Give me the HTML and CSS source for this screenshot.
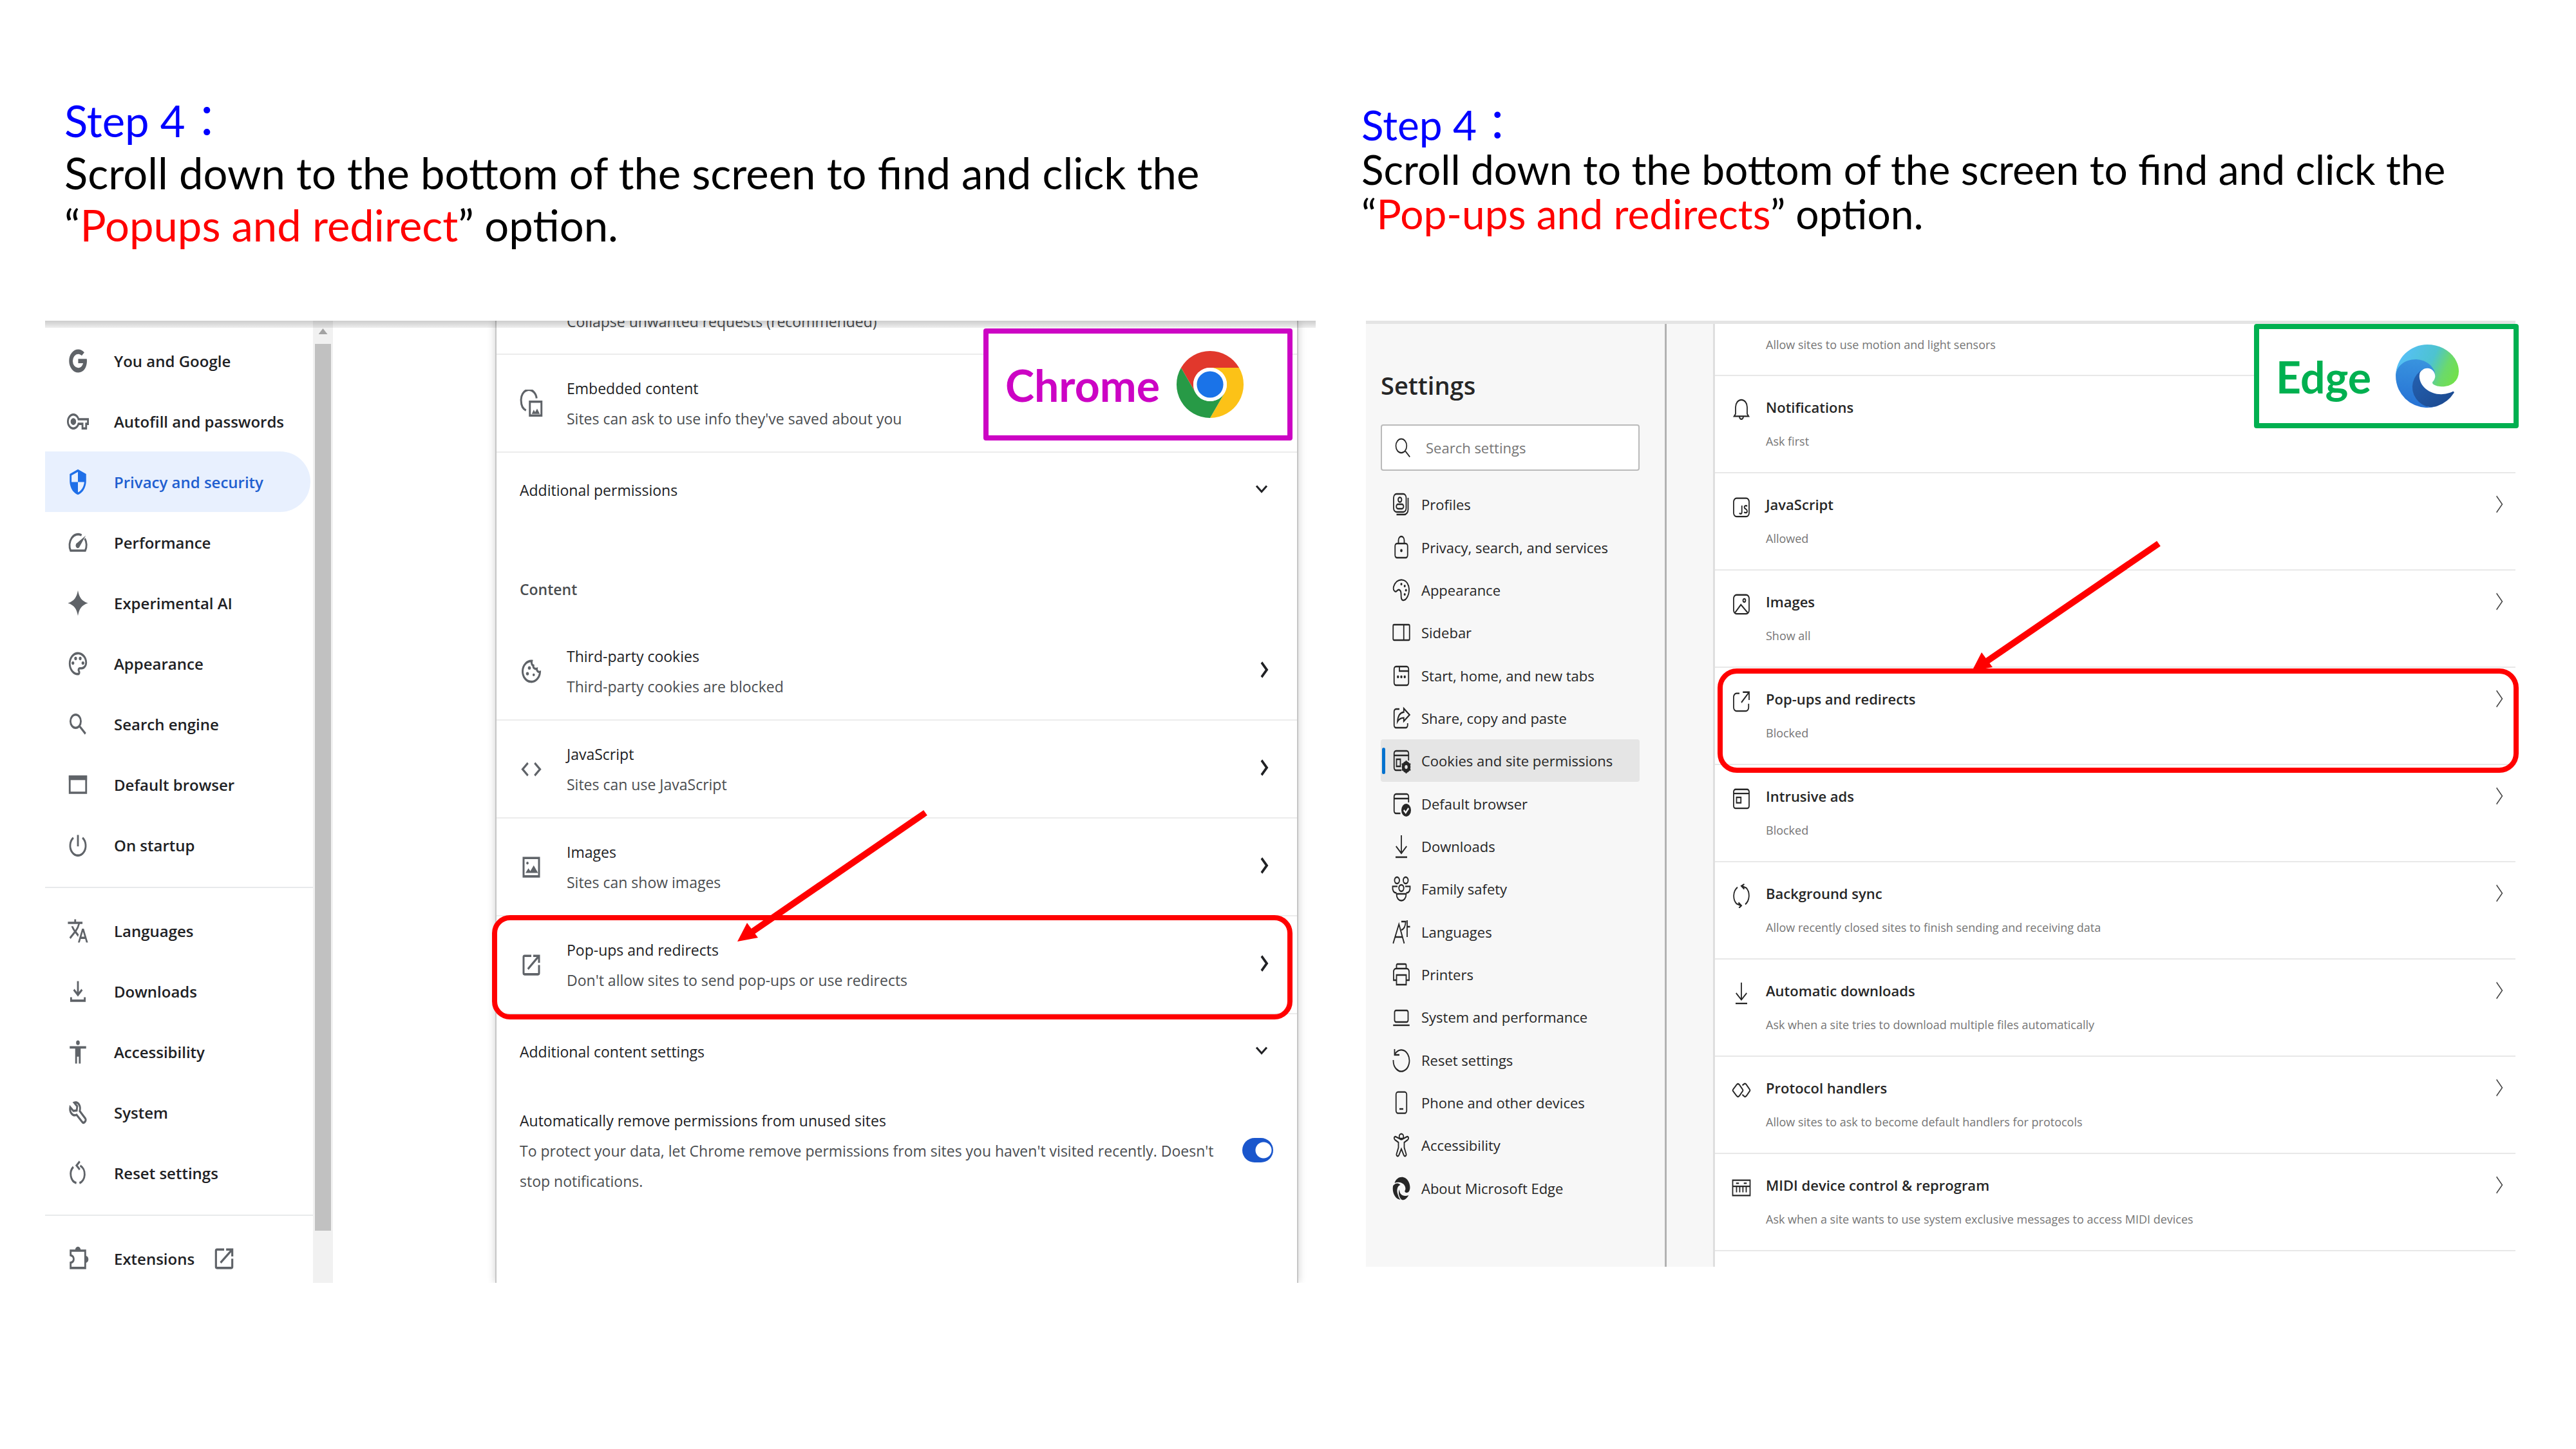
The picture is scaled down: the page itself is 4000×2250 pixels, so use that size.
FILE: index.html
```html
<!DOCTYPE html>
<html lang="en">
<head>
<meta charset="utf-8">
<title>Step 4: pop-ups and redirects</title>
<link rel="stylesheet" href="styles.css">
</head>
<body>
<svg class="sprite" aria-hidden="true">
  <defs>
    <linearGradient id="edge-dark" x1="0" y1="0" x2="1" y2="1"><stop offset="0" stop-color="#2563b4"/><stop offset="1" stop-color="#1b478c"/></linearGradient>
    <linearGradient id="edge-blue" x1="0.4" y1="0" x2="0.3" y2="1"><stop offset="0" stop-color="#3a95df"/><stop offset="1" stop-color="#2671d4"/></linearGradient>
    <linearGradient id="edge-green" x1="0" y1="0.3" x2="1" y2="0.6"><stop offset="0" stop-color="#57bffb"/><stop offset="0.55" stop-color="#4dc3d0"/><stop offset="0.8" stop-color="#6bd96c"/><stop offset="1" stop-color="#72e04c"/></linearGradient>
  </defs>
  <symbol id="g" viewBox="0 0 24 24" preserveAspectRatio="none"><path d="M12.3 10.2v3.8h5.4c-.7 2.3-2.6 4-5.4 4a6 6 0 1 1 0-12c1.500 0 2.900.5 3.900 1.400l2.800-2.800A10 10 0 0 0 12.300 2a10 10 0 1 0 0 20c8.400 0 10.200-7.900 9.400-11.800z"/></symbol>
  <symbol id="key" viewBox="0 0 24 24" preserveAspectRatio="none"><path d="M22 19h-6v-4h-2.700a7 7 0 1 1 0-6H24v6h-2zm-4-2h2v-4h2v-2H11.900a5 5 0 1 0 0 2H18zM7 15a3 3 0 1 1 0-6 3 3 0 0 1 0 6z"/></symbol>
  <symbol id="shield" viewBox="0 0 24 24" preserveAspectRatio="none"><path d="M12 1L3 5v6c0 5.550 3.840 10.740 9 12 5.160-1.260 9-6.450 9-12V5zm0 11h7c-.5 4.100-3.300 7.800-7 8.900V12H5V6.300l7-3.100z"/></symbol>
  <symbol id="speed" viewBox="0 0 24 24" preserveAspectRatio="none"><path class="s2" d="M16 5.600A9.500 9.500 0 0 0 4 19h16a9.500 9.500 0 0 0-.5-10.500"/><path d="M20.500 6l-6.500 9.300a2.300 2.300 0 1 1-2.800-3z"/></symbol>
  <symbol id="spark" viewBox="0 0 24 24" preserveAspectRatio="none"><path d="M12 1c1.400 6 4 9.200 11 11-7 1.800-9.600 5-11 11-1.400-6-4-9.200-11-11 7-1.800 9.600-5 11-11z"/></symbol>
  <symbol id="palette" viewBox="0 0 24 24" preserveAspectRatio="none"><path d="M12 22a10 10 0 1 1 0-20c5.500 0 10 4 10 9 0 3.300-2.700 6-6 6h-1.800c-.3 0-.5.2-.5.5 0 .7.800.9.800 2A2.500 2.500 0 0 1 12 22zm0-18a8 8 0 0 0 0 16c.5 0 .6-.5.400-.8-1.600-1.700-.400-4.200 1.800-4.200H16a4 4 0 0 0 4-4c0-3.900-3.600-7-8-7z"/><circle cx="6.500" cy="11.500" r="1.500"/><circle cx="9.500" cy="7.500" r="1.500"/><circle cx="14.500" cy="7.500" r="1.500"/><circle cx="17.500" cy="11.500" r="1.500"/></symbol>
  <symbol id="search" viewBox="0 0 24 24" preserveAspectRatio="none"><circle class="s2" cx="9.500" cy="9.500" r="5.700"/><path class="s2" d="M14 14l6.300 6.300"/></symbol>
  <symbol id="window" viewBox="0 0 24 24" preserveAspectRatio="none"><path class="s2" d="M3 5h18v14H3z"/><path d="M2 4h20v4H2z"/></symbol>
  <symbol id="power" viewBox="0 0 24 24" preserveAspectRatio="none"><path class="s2" d="M12 3v10M7 5.500a8.500 8.500 0 1 0 10 0"/></symbol>
  <symbol id="translate" viewBox="0 0 24 24" preserveAspectRatio="none"><path d="M12.900 15.100l-2.500-2.500a17 17 0 0 0 3.700-6.600H17V4h-7V2H8v2H1v2h11.200A16 16 0 0 1 9 11.300 16 16 0 0 1 6.700 8h-2c.7 1.600 1.700 3.200 3 4.600l-5.100 5L4 19l5-5 3.100 3.100zM18.500 10h-2L12 22h2l1.100-3h4.800l1.100 3h2zm-2.600 7l1.600-4.300 1.600 4.300z"/></symbol>
  <symbol id="download" viewBox="0 0 24 24" preserveAspectRatio="none"><path class="s2" d="M12 3v12M7.500 10.500L12 15l4.500-4.500M4.500 17v3h15v-3"/></symbol>
  <symbol id="person" viewBox="0 0 24 24" preserveAspectRatio="none"><path d="M12 2a2 2 0 1 1 0 4 2 2 0 0 1 0-4zm9 7h-6v13h-2v-6h-2v6H9V9H3V7h18z"/></symbol>
  <symbol id="wrench" viewBox="0 0 24 24" preserveAspectRatio="none"><path class="s2" d="M8 3.500l3.200 3.200-.5 3.500-3.700.4L3.500 7.300C2.500 11.500 6 15.500 10.500 14l6.500 6.500c1.600 1.300 4.500-1.500 3.200-3.200L14 10.700C15.500 6 12 2.300 8 3.500z"/></symbol>
  <symbol id="reset" viewBox="0 0 24 24" preserveAspectRatio="none"><path class="s2" d="M14.500 5.700a8 8 0 0 1-.8 15M10.300 20.700A8 8 0 0 1 7 6.700M14 2l-3.500 3.400L14 9"/></symbol>
  <symbol id="puzzle" viewBox="0 0 24 24" preserveAspectRatio="none"><path class="s2" d="M4 5h16v15H4v-4.500c4.500-1 4.500-5.500 0-6.500z"/><path d="M9 4.500a3 3 0 0 1 6 0zM20.500 9.500a3 3 0 0 1 0 6z"/></symbol>
  <symbol id="open" viewBox="0 0 24 24" preserveAspectRatio="none"><path d="M19 19H5V5h7V3H5a2 2 0 0 0-2 2v14a2 2 0 0 0 2 2h14a2 2 0 0 0 2-2v-7h-2zM14 3v2h3.600l-9.800 9.800 1.400 1.400L19 6.400V10h2V3z"/></symbol>
  <symbol id="embed" viewBox="0 0 24 24" preserveAspectRatio="none"><path class="s2" d="M17.500 7.500A8 8.500 0 0 0 1.500 10c0 3.500 1.800 6.500 5 8M10.500 10.500h12v12h-12z"/><path d="M12.500 21l2-3.500 1.500 2 2-3 2.800 4.500z"/></symbol>
  <symbol id="cookie" viewBox="0 0 24 24" preserveAspectRatio="none"><path class="s2" d="M12.500 3A9 9 0 1 0 21 12.500c-2 .3-3.500-.8-3.300-2.800-2 .5-4-.7-3.600-2.700C12.500 6.500 12 4.800 12.500 3z"/><circle cx="10" cy="9" r="1.500"/><circle cx="8" cy="14" r="1.500"/><circle cx="14.500" cy="15" r="1.200"/></symbol>
  <symbol id="code" viewBox="0 0 24 24" preserveAspectRatio="none"><path class="s2" d="M8.500 6.500L3 12l5.500 5.500M15.500 6.500L21 12l-5.500 5.500"/></symbol>
  <symbol id="image" viewBox="0 0 24 24" preserveAspectRatio="none"><path class="s2" d="M4 4h16v16H4z"/><path d="M6 17l3-4 2 2.500 3.500-5L19 17z"/><circle cx="8" cy="8.500" r="1.200"/></symbol>
  <symbol id="right" viewBox="0 0 24 24" preserveAspectRatio="none"><path class="s3" d="M8.500 4l7 8-7 8"/></symbol>
  <symbol id="down" viewBox="0 0 24 24" preserveAspectRatio="none"><path class="s3" d="M4 7.500l8 9 8-9"/></symbol>

  <symbol id="e-search" viewBox="0 0 20 20" preserveAspectRatio="none"><circle class="s1" cx="8.500" cy="8.500" r="6"/><path class="s1" d="M13 13l5 5"/></symbol>
  <symbol id="e-profile" viewBox="0 0 20 20" preserveAspectRatio="none"><rect class="s1" x="2" y="2" width="13" height="14" rx="3"/><path class="s1" d="M17 5v9a4 4 0 0 1-4 4H5"/><circle class="s1" cx="8.500" cy="6.500" r="1.800"/><rect class="s1" x="4.800" y="10" width="7.500" height="3.500" rx="1.700"/></symbol>
  <symbol id="e-lock" viewBox="0 0 20 20" preserveAspectRatio="none"><rect class="s1" x="3.500" y="7" width="13" height="11" rx="2"/><path class="s1" d="M7 7V4.500a3 3 0 0 1 6 0V7"/><circle cx="10" cy="12.500" r="1.200"/></symbol>
  <symbol id="e-palette" viewBox="0 0 20 20" preserveAspectRatio="none"><path class="s1" d="M2 7.500C5 .5 15 .5 17.500 7c2 6-2.500 11.500-6 11-3.500-.8 0-7-3.500-8-2.500-.8-2.500 2-4.500 1.200C2 10.500 1.500 9 2 7.500z"/><circle cx="10" cy="5.500" r="1"/><circle cx="13.500" cy="7" r="1"/><circle cx="14.800" cy="10.300" r="1"/><circle cx="13.500" cy="13.500" r="1"/></symbol>
  <symbol id="e-sidebar" viewBox="0 0 20 20" preserveAspectRatio="none"><rect class="s1" x="1.500" y="4" width="17" height="12" rx="1"/><path class="s1" d="M12.500 4v12"/></symbol>
  <symbol id="e-start" viewBox="0 0 20 20" preserveAspectRatio="none"><rect class="s1" x="2.500" y="3" width="15" height="14.500" rx="2"/><path class="s1" d="M8 3.500v3h9.500"/><circle cx="6.500" cy="11" r="1.100"/><circle cx="10" cy="11" r="1.100"/><circle cx="13.500" cy="11" r="1.100"/></symbol>
  <symbol id="e-share" viewBox="0 0 20 20" preserveAspectRatio="none"><path class="s1" d="M8 3H4.500a2 2 0 0 0-2 2v10.500a2 2 0 0 0 2 2h10a2 2 0 0 0 2-2V14M12.500 2.500l6 5-6 5V9.800c-3 0-5 1-6.500 3 .4-4 2.500-7 6.500-7.400z"/></symbol>
  <symbol id="e-cookies" viewBox="0 0 20 20" preserveAspectRatio="none"><path class="s1" d="M10 17.500H4.500a2 2 0 0 1-2-2v-11a2 2 0 0 1 2-2h11a2 2 0 0 1 2 2V10M2.500 6h15M5 9h4v5.500H5z"/><circle class="s3" cx="15" cy="15" r="3"/><path class="s1" d="M15 10v2M15 18v2M10.500 12.500l2 1M17.500 16.500l2 1M10.500 17.500l2-1M17.500 13.500l2-1"/></symbol>
  <symbol id="e-default" viewBox="0 0 20 20" preserveAspectRatio="none"><path class="s1" d="M9 17.500H4.500a2 2 0 0 1-2-2v-11a2 2 0 0 1 2-2h11a2 2 0 0 1 2 2V9M2.500 6h15"/><circle cx="15" cy="15" r="5"/><path class="cut" d="M12.500 15l2 2 3-3.500"/></symbol>
  <symbol id="e-download" viewBox="0 0 20 20" preserveAspectRatio="none"><path class="s1" d="M10 1.500v13.500M4.500 10l5.500 5.500 5.500-5.500M4 18.500h12"/></symbol>
  <symbol id="e-family" viewBox="0 0 20 20" preserveAspectRatio="none"><circle class="s1" cx="5.500" cy="3.500" r="2.500"/><circle class="s1" cx="14.500" cy="3.500" r="2.500"/><circle class="s1" cx="10" cy="9.500" r="2.500"/><path class="s1" d="M6 8.200H1c-.4 3 1 5 4 5M14 8.200h5c.4 3-1 5-4 5M5 14h10c0 7-10 7-10 0z"/></symbol>
  <symbol id="e-language" viewBox="0 0 20 20" preserveAspectRatio="none"><path class="s1" d="M1.500 19L7.500 4l5.500 15M3.500 14h8M10 2h4.500c-.3 4-2 6-4.500 6.500M16 1v13M16 6h3"/></symbol>
  <symbol id="e-printer" viewBox="0 0 20 20" preserveAspectRatio="none"><path class="s1" d="M5 5.500V3a1 1 0 0 1 1-1h8a1 1 0 0 1 1 1v2.500M5 14.500H2V8a2.500 2.500 0 0 1 2.500-2.500h11A2.500 2.500 0 0 1 18 8v6.500h-3M5 10.500h10V18H5z"/></symbol>
  <symbol id="e-laptop" viewBox="0 0 20 20" preserveAspectRatio="none"><rect class="s1" x="3" y="5" width="14" height="9" rx="1.500"/><path class="s1" d="M1.500 16.500h17"/></symbol>
  <symbol id="e-reset" viewBox="0 0 20 20" preserveAspectRatio="none"><path class="s1" d="M3 1.500V6h5M3 6A8.300 8.300 0 1 1 1.700 10"/></symbol>
  <symbol id="e-phone" viewBox="0 0 20 20" preserveAspectRatio="none"><rect class="s1" x="4.500" y="1.800" width="11" height="16.500" rx="2"/><path class="s1" d="M8 15h4"/></symbol>
  <symbol id="e-access" viewBox="0 0 20 20" preserveAspectRatio="none"><circle class="s1" cx="10" cy="3.500" r="2.200"/><path class="s1" d="M8 5L4 3.500C2.500 3.200 2 5 3.500 6L7 8v4l-2 5c-.4 1.700 1.800 2.300 2.500.8L10 13l2.500 4.800c.7 1.500 2.900.9 2.500-.8l-2-5V8l3.500-2C18 5 17.500 3.200 16 3.500L12 5z"/></symbol>
  <symbol id="e-edge" viewBox="0 0 20 20" preserveAspectRatio="none"><path d="M3 6C5 .5 14-.5 17.500 5c3 4.500 1 9-2.500 8.500-2-.3-1.500-1.500-.8-2.500C15 7 9 4 3 6zM1.500 8c3-2.500 6-2 7.500-.5-3 .5-4 4-3 6.500.7 2 1.500 3.500 3 5C3.500 18.500 0 13 1.500 8zM8 11c0 4 4 6 9.500 4.500C15 19 12 19.500 10.500 19 7.500 17.500 6.500 13 8 11z"/></symbol>
  <symbol id="e-bell" viewBox="0 0 20 20" preserveAspectRatio="none"><path class="s1" d="M4 13.500V8a6 6 0 0 1 12 0v5.500l1.500 2H2.500zM8 16c.5 2.500 3.500 2.500 4 0"/></symbol>
  <symbol id="e-js" viewBox="0 0 20 20" preserveAspectRatio="none"><rect class="s1" x="2" y="3" width="16" height="15" rx="3"/><path class="s1" d="M10.500 9v5.500c0 1.500-2 1.500-2.500.5M16 9.500c-1-.8-3-.5-3 .8 0 1.700 3 1.200 3 3.200 0 1.500-2.200 1.700-3.200.8"/></symbol>
  <symbol id="e-image" viewBox="0 0 20 20" preserveAspectRatio="none"><rect class="s1" x="2" y="2.500" width="16" height="15.500" rx="3"/><circle class="s1" cx="13" cy="7" r="1.300"/><path class="s1" d="M3.500 17l6-6.500 7 6.500"/></symbol>
  <symbol id="e-open" viewBox="0 0 20 20" preserveAspectRatio="none"><path class="s1" d="M8 3.500H5a3 3 0 0 0-3 3V15a3 3 0 0 0 3 3h9.500a3 3 0 0 0 3-3v-3M11.500 2.500H18V9M18 2.500L10 11"/></symbol>
  <symbol id="e-ads" viewBox="0 0 20 20" preserveAspectRatio="none"><rect class="s1" x="2" y="2.500" width="16" height="15.500" rx="2"/><path class="s1" d="M2 5.800h16M5 9h4.500v4.500H5z"/></symbol>
  <symbol id="e-sync" viewBox="0 0 20 20" preserveAspectRatio="none"><path class="s1" d="M6 3a8.500 8.500 0 0 0-1 13.500L9.500 18M7 15.500L10 18l-2.500 2M14 17a8.500 8.500 0 0 0 1-13.500L10.500 2M13 .5L10 2l3 2.500"/></symbol>
  <symbol id="e-protocol" viewBox="0 0 20 20" preserveAspectRatio="none"><path class="s1" d="M1.500 9.200L5 5.500c1-1 2-1 3 0l3.200 3.700c.6.6.6 1 0 1.600L8 14.500c-1 1-2 1-3 0l-3.500-3.700c-.6-.6-.6-1 0-1.600zM11 6l1.500-1c1-.7 2-.5 2.800.5l3.200 3.700c.6.6.6 1 0 1.600l-3.200 3.700c-1 1-2 1-3 0L11 13.500"/></symbol>
  <symbol id="e-midi" viewBox="0 0 20 20" preserveAspectRatio="none"><path class="s1" d="M1 4h18v12.500H1zM1 9h18M5 9v5M8.300 9v5M11.600 9v5M15 9v5M4.500 6.500h3M12.500 6.500h3"/></symbol>
  <symbol id="e-right" viewBox="0 0 20 20" preserveAspectRatio="none"><path class="s1" d="M6 2.500l8 7.500-8 7.500"/></symbol>
</svg>

<main class="slide">
  <section class="guide guide-chrome">
    <header class="instruction">
      <h2 class="step">Step 4<span lang="zh-Hant">：</span></h2>
      <p>Scroll down to the bottom of the screen to find and click the “<em>Popups and redirect</em>” option.</p>
    </header>
    <div class="chrome">
      <nav class="c-nav" aria-label="Chrome settings">
        <a href="#"><svg><use href="#g"/></svg>You and Google</a>
        <a href="#"><svg><use href="#key"/></svg>Autofill and passwords</a>
        <a href="#" class="current"><svg><use href="#shield"/></svg>Privacy and security</a>
        <a href="#"><svg><use href="#speed"/></svg>Performance</a>
        <a href="#"><svg><use href="#spark"/></svg>Experimental AI</a>
        <a href="#"><svg><use href="#palette"/></svg>Appearance</a>
        <a href="#"><svg><use href="#search"/></svg>Search engine</a>
        <a href="#"><svg><use href="#window"/></svg>Default browser</a>
        <a href="#"><svg><use href="#power"/></svg>On startup</a>
        <hr>
        <a href="#"><svg><use href="#translate"/></svg>Languages</a>
        <a href="#"><svg><use href="#download"/></svg>Downloads</a>
        <a href="#"><svg><use href="#person"/></svg>Accessibility</a>
        <a href="#"><svg><use href="#wrench"/></svg>System</a>
        <a href="#"><svg><use href="#reset"/></svg>Reset settings</a>
        <hr>
        <a href="#"><svg><use href="#puzzle"/></svg>Extensions<svg class="external"><use href="#open"/></svg></a>
      </nav>
      <div class="scrollbar"><span class="up"></span><span class="thumb"></span></div>
      <div class="c-card">
        <div class="c-cut"><span>Collapse unwanted requests (recommended)</span></div>
        <a href="#" class="c-row"><svg><use href="#embed"/></svg><span><b>Embedded content</b><small>Sites can ask to use info they've saved about you</small></span></a>
        <button type="button" class="c-expand">Additional permissions<svg><use href="#down"/></svg></button>
        <h3 class="c-title">Content</h3>
        <a href="#" class="c-row"><svg><use href="#cookie"/></svg><span><b>Third-party cookies</b><small>Third-party cookies are blocked</small></span><svg class="go"><use href="#right"/></svg></a>
        <a href="#" class="c-row"><svg><use href="#code"/></svg><span><b>JavaScript</b><small>Sites can use JavaScript</small></span><svg class="go"><use href="#right"/></svg></a>
        <a href="#" class="c-row"><svg><use href="#image"/></svg><span><b>Images</b><small>Sites can show images</small></span><svg class="go"><use href="#right"/></svg></a>
        <a href="#" class="c-row marked"><svg><use href="#open"/></svg><span><b>Pop-ups and redirects</b><small>Don't allow sites to send pop-ups or use redirects</small></span><svg class="go"><use href="#right"/></svg>
          <svg class="arrow" viewBox="0 0 296 208"><path d="M292 5L20 192" stroke="#f00" stroke-width="10"/><path d="M0 205l15-29 17 23z" fill="#f00"/></svg></a>
        <button type="button" class="c-expand">Additional content settings<svg><use href="#down"/></svg></button>
        <label class="c-toggle"><span><b>Automatically remove permissions from unused sites</b><small>To protect your data, let Chrome remove permissions from sites you haven't visited recently. Doesn't stop notifications.</small></span><input type="checkbox" checked></label>
      </div>
      <div class="badge badge-chrome">Chrome<svg viewBox="0 0 48 48"><path fill="#e1382c" d="M24 12h20.800A24 24 0 0 0 3.200 12l10.400 18A12 12 0 0 1 24 12z"/><path fill="#fcc217" d="M44.800 12H24a12 12 0 0 1 10.400 18L24 48a24 24 0 0 0 20.800-36z"/><path fill="#279a46" d="M3.200 12A24 24 0 0 0 24 48l10.400-18a12 12 0 0 1-20.800 0z"/><circle cx="24" cy="24" r="12" fill="#fff"/><circle cx="24" cy="24" r="9.500" fill="#1a73e8"/></svg></div>
    </div>
  </section>

  <section class="guide guide-edge">
    <header class="instruction">
      <h2 class="step">Step 4<span lang="zh-Hant">：</span></h2>
      <p>Scroll down to the bottom of the screen to find and click the “<em>Pop-ups and redirects</em>” option.</p>
    </header>
    <div class="edge">
      <div class="e-side">
        <h3 class="e-title">Settings</h3>
        <label class="e-search"><svg><use href="#e-search"/></svg><input type="search" placeholder="Search settings" aria-label="Search settings"></label>
        <nav class="e-nav" aria-label="Edge settings">
          <a href="#"><svg><use href="#e-profile"/></svg>Profiles</a>
          <a href="#"><svg><use href="#e-lock"/></svg>Privacy, search, and services</a>
          <a href="#"><svg><use href="#e-palette"/></svg>Appearance</a>
          <a href="#"><svg><use href="#e-sidebar"/></svg>Sidebar</a>
          <a href="#"><svg><use href="#e-start"/></svg>Start, home, and new tabs</a>
          <a href="#"><svg><use href="#e-share"/></svg>Share, copy and paste</a>
          <a href="#" class="current"><svg><use href="#e-cookies"/></svg>Cookies and site permissions</a>
          <a href="#"><svg><use href="#e-default"/></svg>Default browser</a>
          <a href="#"><svg><use href="#e-download"/></svg>Downloads</a>
          <a href="#"><svg><use href="#e-family"/></svg>Family safety</a>
          <a href="#"><svg><use href="#e-language"/></svg>Languages</a>
          <a href="#"><svg><use href="#e-printer"/></svg>Printers</a>
          <a href="#"><svg><use href="#e-laptop"/></svg>System and performance</a>
          <a href="#"><svg><use href="#e-reset"/></svg>Reset settings</a>
          <a href="#"><svg><use href="#e-phone"/></svg>Phone and other devices</a>
          <a href="#"><svg><use href="#e-access"/></svg>Accessibility</a>
          <a href="#"><svg><use href="#e-edge"/></svg>About Microsoft Edge</a>
        </nav>
      </div>
      <div class="e-card">
        <div class="e-cut"><small>Allow sites to use motion and light sensors</small></div>
        <a href="#" class="e-row"><svg><use href="#e-bell"/></svg><span><b>Notifications</b><small>Ask first</small></span></a>
        <a href="#" class="e-row"><svg><use href="#e-js"/></svg><span><b>JavaScript</b><small>Allowed</small></span><svg class="go"><use href="#e-right"/></svg></a>
        <a href="#" class="e-row"><svg><use href="#e-image"/></svg><span><b>Images</b><small>Show all</small></span><svg class="go"><use href="#e-right"/></svg></a>
        <a href="#" class="e-row marked"><svg><use href="#e-open"/></svg><span><b>Pop-ups and redirects</b><small>Blocked</small></span><svg class="go"><use href="#e-right"/></svg>
          <svg class="arrow" viewBox="0 0 294 208"><path d="M290 5L20 190" stroke="#f00" stroke-width="10"/><path d="M0 203l15-29 17 23z" fill="#f00"/></svg></a>
        <a href="#" class="e-row"><svg><use href="#e-ads"/></svg><span><b>Intrusive ads</b><small>Blocked</small></span><svg class="go"><use href="#e-right"/></svg></a>
        <a href="#" class="e-row"><svg><use href="#e-sync"/></svg><span><b>Background sync</b><small>Allow recently closed sites to finish sending and receiving data</small></span><svg class="go"><use href="#e-right"/></svg></a>
        <a href="#" class="e-row"><svg><use href="#e-download"/></svg><span><b>Automatic downloads</b><small>Ask when a site tries to download multiple files automatically</small></span><svg class="go"><use href="#e-right"/></svg></a>
        <a href="#" class="e-row"><svg><use href="#e-protocol"/></svg><span><b>Protocol handlers</b><small>Allow sites to ask to become default handlers for protocols</small></span><svg class="go"><use href="#e-right"/></svg></a>
        <a href="#" class="e-row"><svg><use href="#e-midi"/></svg><span><b>MIDI device control &amp; reprogram</b><small>Ask when a site wants to use system exclusive messages to access MIDI devices</small></span><svg class="go"><use href="#e-right"/></svg></a>
      </div>
      <div class="badge badge-edge">Edge<svg viewBox="0 0 256 256"><g transform="translate(-4.600 -4.900)"><path fill="url(#edge-dark)" d="M235.680 195.460a93.730 93.730 0 0 1-10.540 4.710 101.870 101.870 0 0 1-35.900 6.460c-47.320 0-88.540-32.550-88.540-74.320A31.480 31.480 0 0 1 117.130 105c-42.800 1.800-53.800 46.400-53.800 72.530 0 73.880 68.090 81.370 82.760 81.370 7.910 0 19.840-2.300 27-4.560l1.310-.44a128.340 128.340 0 0 0 66.600-52.800 4 4 0 0 0-5.320-5.640z"/></g><path fill="url(#edge-blue)" d="M105.730 241.420A79.200 79.200 0 0 1 83 220.080a80.720 80.720 0 0 1 29.500-120c3.200-1.500 8.500-4.100 15.600-4a32.370 32.370 0 0 1 25.690 13 31.880 31.880 0 0 1 6.360 18.660c0-.21 24.460-79.600-80-79.600-43.900 0-80 41.660-80 78.210a130.150 130.150 0 0 0 12.110 56 128 128 0 0 0 156.380 67.110 75.550 75.550 0 0 1-62.780-8z"/><path fill="url(#edge-green)" d="M152.330 148.860c-.81 1.050-3.300 2.500-3.300 5.660 0 2.610 1.700 5.120 4.720 7.230 14.380 10 41.490 8.680 41.560 8.680a59.560 59.560 0 0 0 30.270-8.350 61.380 61.380 0 0 0 30.430-52.880c.26-22.410-8-37.310-11.340-43.910C223.460 23.900 177.720 0 128 0A128 128 0 0 0 0 126.200c.48-36.540 36.800-66.050 80-66.050 3.500 0 23.460.34 42 10.070 16.340 8.580 24.900 18.940 30.850 29.210 6.180 10.670 7.280 24.150 7.280 29.520s-2.740 13.330-7.800 19.910z"/></svg></div>
    </div>
  </section>
</main>
</body>
</html>
```
FILE: styles.css
```css
* { box-sizing: border-box; }

body {
  margin: 0;
  background: #fff;
  color: #000;
  font-family: "Open Sans", "Noto Sans", sans-serif;
  font-size: 23px;
}

a { color: inherit; text-decoration: none; }
b { font-weight: 400; }
svg { flex: none; fill: currentColor; overflow: visible; }
.sprite { position: absolute; width: 0; height: 0; }
.s1, .s2, .s3 { fill: none; stroke: currentColor; }
.s1 { stroke-width: 1.2; }
.s2 { stroke-width: 2; }
.s3 { stroke-width: 3; }
.cut { fill: none; stroke: #f7f7f7; stroke-width: 1.4; }

.slide {
  display: grid;
  grid-template-columns: 1973fr 1794fr;
  column-gap: 69px;
  padding: 0 94px 0 70px;
}

/* Instructions above each browser */
.instruction {
  height: 498px;
  padding: 147px 0 0 30px;
  font-family: Lato, "Noto Sans CJK TC", sans-serif;
  font-size: 67px;
  line-height: 81px;
}
.instruction p { margin: 0; max-width: 1800px; }
.instruction em { color: #f00; font-style: normal; }
.step { margin: 0; color: #00f; font-size: inherit; font-weight: 400; }
.guide-edge .instruction { padding: 159px 0 0 2px; font-size: 64px; line-height: 69px; }

/* Chrome */
.chrome { position: relative; display: flex; height: 1494px; color: #202124; }
.chrome::before {
  content: "";
  position: absolute;
  inset: 0 0 auto;
  height: 11px;
  background: linear-gradient(#0003, #0001);
  z-index: 1;
}
.c-nav { width: 416px; padding-top: 15px; }
.c-nav a {
  display: flex;
  align-items: center;
  gap: 39px;
  height: 94px;
  margin-right: 4px;
  padding-left: 34px;
  font-size: 24px;
  font-weight: 600;
  white-space: nowrap;
}
.c-nav svg { width: 34px; height: 43px; color: #5f6368; }
.c-nav svg.external { width: 38px; margin-left: -12px; }
.c-nav .current { background: #e8f0fe; border-radius: 0 47px 47px 0; color: #1f5fd0; }
.c-nav .current svg { color: #1f6fe8; }
.c-nav hr { height: 2px; margin: 18px 0 19px; border: 0; background: #e8eaeb; }

.scrollbar { width: 31px; padding: 12px 3px 0; background: #f1f1f1; }
.up { display: block; width: 14px; height: 9px; margin: 0 auto 15px; background: #a3a3a3; clip-path: polygon(50% 0, 100% 100%, 0 100%); }
.thumb { display: block; height: 1377px; background: #c1c1c1; }

.c-card {
  flex: 1;
  margin: 0 27px 0 252px;
  border: solid #c6c6c6;
  border-width: 0 2px;
  box-shadow: 0 0 12px #0003;
  clip-path: inset(0 -27px);
}
.c-cut { height: 51px; padding-left: 109px; overflow: hidden; color: #4a4d50; }
.c-cut span { display: block; margin-top: -22px; line-height: 47px; }
.c-row, .c-toggle, .c-expand { display: flex; align-items: center; padding: 0 49px 0 36px; }
.c-row { position: relative; height: 152px; border-top: 2px solid #ececec; }
.c-row svg { width: 36px; height: 43px; color: #5f6368; }
.c-row > span { flex: 1; margin-left: 37px; padding-top: 2px; }
.c-card b, .c-card small { display: block; font-size: 23px; line-height: 47px; }
.c-card small { color: #4a4d50; }
.c-row svg.go { width: 28px; height: 34px; margin: 0 -12px 4px 0; color: #202124; }
.c-expand {
  justify-content: space-between;
  width: 100%;
  height: 118px;
  border: 0;
  border-top: 2px solid #ececec;
  background: none;
  color: inherit;
  font: inherit;
}
.c-expand svg { width: 24px; height: 24px; margin: 0 -6px 4px 0; }
.c-title { height: 146px; margin: 0; padding: 73px 36px 0; font-size: 23px; font-weight: 600; line-height: 47px; color: #4a4d50; }
.c-title + .c-row { border-color: transparent; }
.c-toggle { gap: 20px; padding: 26px 37px 0 36px; }
.c-toggle span { flex: 1; }
.c-toggle input {
  appearance: none;
  width: 48px;
  height: 38px;
  margin: 0 0 4px;
  border-radius: 19px;
  background: radial-gradient(circle at 33px 19px, #fff 12px, #1a56cc 13px);
}

/* Edge */
.edge {
  position: relative;
  display: flex;
  height: 1469px;
  margin-left: 9px;
  border-top: 5px solid #e4e4e4;
  background: #f7f7f7;
  color: #262626;
  font-size: 22px;
}
.e-side { display: flex; flex-direction: column; width: 467px; padding: 0 39px 89px 23px; border-right: 3px solid #b3b3b3; }
.e-title { margin: 63px 0 29px; font-size: 38px; font-weight: 600; line-height: 64px; }
.e-search {
  display: flex;
  flex: none;
  align-items: center;
  gap: 22px;
  height: 72px;
  padding-left: 18px;
  border: 2px solid #bababa;
  border-radius: 4px;
  background: #fff;
}
.e-search svg { width: 28px; height: 36px; }
.e-search input { width: 100%; padding: 0; border: 0; outline: 0; background: none; font: inherit; }
.e-search input::placeholder { color: #767676; }
.e-nav { display: grid; grid-template-rows: repeat(17, 1fr); flex: 1; margin-top: 19px; white-space: nowrap; }
.e-nav a { position: relative; display: flex; align-items: center; gap: 16px; padding-left: 17px; }
.e-nav svg { width: 30px; height: 40px; }
.e-nav .current { border-radius: 4px; background: #e5e5e5; }
.e-nav .current::before { content: ""; position: absolute; left: 2px; width: 5px; height: 41px; border-radius: 3px; background: #0071ce; }

.e-card { flex: 1; margin-left: 72px; border-left: 3px solid #dfdfdf; background: #fff; }
.e-cut { height: 79px; padding: 9px 0 0 79px; }
.e-card b, .e-card small { display: block; line-height: 47px; }
.e-card b { font-size: 22px; font-weight: 600; }
.e-card small { color: #767676; font-size: 18px; }
.e-row { position: relative; display: flex; align-items: flex-start; height: 151px; padding: 25px 14px 0 26px; border-top: 2px solid #e8e8e8; }
.e-row:last-child { border-bottom: 2px solid #e8e8e8; height: 153px; }
.e-row svg { width: 30px; height: 38px; margin-top: 8px; }
.e-row > span { display: grid; flex: 1; row-gap: 6px; margin-left: 23px; }
.e-row svg.go { width: 22px; height: 34px; margin-top: 6px; color: #444; }

/* Callouts */
.marked::after { content: ""; position: absolute; inset: -2px 7px -10px -7px; border: 8px solid #f00; border-radius: 28px; }
.edge .marked::after { inset: 1px -5px -14px 4px; border-radius: 30px; z-index: 1; }
.marked svg.arrow { position: absolute; left: 374px; top: -166px; width: 296px; height: 208px; margin: 0; }
.edge .marked svg.arrow { left: 399px; top: -198px; width: 294px; }

.badge {
  position: absolute;
  z-index: 2;
  display: flex;
  align-items: center;
  border: 8px solid #00b050;
  border-radius: 4px;
  background: #fff;
  color: #00b050;
  font-family: Lato, sans-serif;
  font-size: 68px;
  font-weight: 700;
}
.badge-chrome { right: 36px; top: 12px; gap: 26px; width: 480px; height: 174px; padding: 0 0 0 26px; border-color: #cc04c4; color: #cc04c4; }
.badge-chrome svg { width: 104px; height: 104px; }
.badge-edge { right: -5px; top: 0; gap: 38px; width: 411px; height: 162px; padding: 0 0 0 26px; }
.badge-edge svg { width: 98px; height: 98px; }
```
